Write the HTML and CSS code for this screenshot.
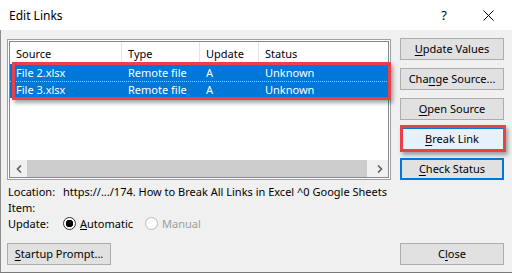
FILE: index.html
```html
<!DOCTYPE html>
<html lang="en">
<head>
  <meta charset="UTF-8">
  <title>Edit Links</title>
  <link rel="stylesheet" href="styles.css">
</head>
<body>

  <div class="titlebar">
    <span class="title">Edit Links</span>
    <span class="help">?</span>
    <span class="close-x">
      <svg width="11" height="11" viewBox="0 0 11 11"><path d="M0.5 0.5 L10.5 10.5 M10.5 0.5 L0.5 10.5" stroke="#000" stroke-width="1" fill="none"/></svg>
    </span>
  </div>

  <div class="dialog">
    <div class="top">
      <!-- links list -->
      <div class="list-frame">
        <div class="listbox">
          <div class="list-head">
            <div class="col c-src">Source</div>
            <div class="col c-type">Type</div>
            <div class="col c-upd">Update</div>
            <div class="col c-status">Status</div>
          </div>
          <div class="row sel">
            <div class="col c-src">File 2.xlsx</div>
            <div class="col c-type">Remote file</div>
            <div class="col c-upd">A</div>
            <div class="col c-status">Unknown</div>
          </div>
          <div class="row sel focus">
            <div class="col c-src">File 3.xlsx</div>
            <div class="col c-type">Remote file</div>
            <div class="col c-upd">A</div>
            <div class="col c-status">Unknown</div>
          </div>
          <div class="list-fill"></div>
          <div class="hscroll">
            <div class="arrow">
              <svg width="6" height="8" viewBox="0 0 6 8"><path d="M5 0.5 L1.5 4 L5 7.5" stroke="#606060" stroke-width="1.6" fill="none"/></svg>
            </div>
            <div class="thumb"></div>
            <div class="track"></div>
            <div class="arrow">
              <svg width="6" height="8" viewBox="0 0 6 8"><path d="M1 0.5 L4.5 4 L1 7.5" stroke="#606060" stroke-width="1.6" fill="none"/></svg>
            </div>
          </div>
        </div>
        <div class="mark mark-rows"></div>
      </div>

      <div class="buttons">
        <button class="btn"><u>U</u>pdate Values</button>
        <button class="btn">Cha<u>n</u>ge Source...</button>
        <button class="btn"><u>O</u>pen Source</button>
        <button class="btn btn-hover"><u>B</u>reak Link</button>
        <button class="btn btn-default"><u>C</u>heck Status</button>
      </div>
    </div>

    <div class="info">
      <div class="info-row">
        <span class="lbl">Location:</span>
        <span>https://.../174. How to Break All Links in Excel ^0 Google Sheets</span>
      </div>
      <div class="info-row">
        <span class="lbl">Item:</span>
      </div>
      <div class="info-row">
        <span class="lbl">Update:</span>
        <span class="radio on"></span>
        <span class="radio-text"><u>A</u>utomatic</span>
        <span class="radio off"></span>
        <span class="radio-text disabled">Manual</span>
      </div>
    </div>

    <div class="bottom">
      <button class="btn"><u>S</u>tartup Prompt...</button>
      <button class="btn">C<u>l</u>ose</button>
    </div>
  </div>

</body>
</html>
```

FILE: styles.css
```css
body {
  margin: 0;
  width: 512px;
  height: 274px;
  background-color: #fff;
  font-family: 'Noto Sans', sans-serif;
  font-size: 11px;
  color: #000;
  overflow: hidden;
}

/* Title bar */
.titlebar {
  height: 30px;
  display: flex;
  align-items: center;
  background-color: #fff;
  padding-left: 9px;
}

.title {
  font-size: 12px;
  flex: 1;
}

.help {
  font-size: 13px;
  margin-right: 36px;
}

.close-x {
  display: flex;
  margin-right: 18px;
}

/* Dialog body */
.dialog {
  box-sizing: border-box;
  height: 243px;
  background-color: #f0f0f0;
  border-left: 1px solid #8e8e8e;
  border-bottom: 1px solid #7a7a7a;
  padding: 8px 0 0 6px;
}

.top {
  display: flex;
  gap: 9px;
}

.list-frame {
  position: relative;
  width: 384px;
  height: 141px;
  box-sizing: border-box;
  margin-top: 1px;
  border: 1px solid #a0a0a0;
  padding: 1px;
  background-color: #fff;
}

.listbox {
  box-sizing: border-box;
  height: 137px;
  border: 1px solid #828790;
  background-color: #fff;
  display: flex;
  flex-direction: column;
}

.list-head, .row {
  display: flex;
}

.list-head {
  height: 22px;
  align-items: stretch;
}

.list-head .col {
  border-right: 1px solid #e5e5e5;
  display: flex;
  align-items: center;
}

.list-head .c-status {
  border-right-color: transparent;
}

.col {
  box-sizing: border-box;
  padding-left: 6px;
  border-right: 1px solid transparent;
  white-space: nowrap;
}

.c-src { width: 112px; }
.c-type { width: 78px; }
.c-upd { width: 59px; }
.c-status { width: 60px; }

.row {
  height: 17px;
  line-height: 17px;
}

.row.sel {
  background-color: #0078d7;
  color: #fff;
}

.row.focus {
  background-image: linear-gradient(to right, #9cc8ee 50%, transparent 50%);
  background-size: 2px 1px;
  background-repeat: repeat-x;
  background-position: top left;
}

.list-fill {
  flex: 1;
}

.hscroll {
  height: 17px;
  display: flex;
  background-color: #f0f0f0;
}

.hscroll .arrow {
  width: 17px;
  display: flex;
  align-items: center;
  justify-content: center;
}

.hscroll .thumb {
  width: 340px;
  background-color: #cdcdcd;
}

.hscroll .track {
  flex: 1;
}

/* red annotation boxes */
.mark {
  position: absolute;
  border: 3px solid #ea4048;
  box-shadow: 2px 3px 4px rgba(0, 0, 0, 0.35);
  pointer-events: none;
}

.mark-rows {
  left: 4px;
  top: 22px;
  width: 373px;
  height: 32px;
}

/* Buttons */
.buttons {
  display: flex;
  flex-direction: column;
  gap: 8px;
}

.btn {
  box-sizing: border-box;
  width: 104px;
  height: 22px;
  padding: 0;
  background-color: #e1e1e1;
  border: 1px solid #adadad;
  font-family: 'Noto Sans', sans-serif;
  font-size: 11px;
  color: #000;
  line-height: 18px;
}

.btn u {
  text-underline-offset: 2px;
}

.btn-hover {
  position: relative;
  background-color: #e5f1fb;
  border-color: #0078d7;
}

.btn-hover::after {
  content: "";
  position: absolute;
  left: -1px;
  top: -4px;
  right: -3px;
  bottom: -3px;
  border: 3px solid #ea4048;
  box-shadow: 2px 3px 4px rgba(0, 0, 0, 0.35);
}

.btn-default {
  border: 2px solid #0078d7;
}

/* Info rows */
.info {
  margin-top: 3px;
  padding-left: 1px;
}

.info-row {
  height: 16px;
  display: flex;
  align-items: center;
  white-space: nowrap;
}

.lbl {
  width: 55px;
}

.radio {
  box-sizing: border-box;
  width: 13px;
  height: 13px;
  border-radius: 50%;
  background-color: #fff;
  margin-right: 4px;
}

.radio.on {
  border: 1px solid #333;
  background: radial-gradient(circle, #000 0, #000 3.5px, #fff 4px);
}

.radio.off {
  border: 1px solid #bcbcbc;
}

.radio-text {
  margin-right: 12px;
}

.radio-text.disabled {
  color: #9d9d9d;
}

.bottom {
  margin-top: 12px;
  display: flex;
  justify-content: space-between;
  width: 497px;
}
```
